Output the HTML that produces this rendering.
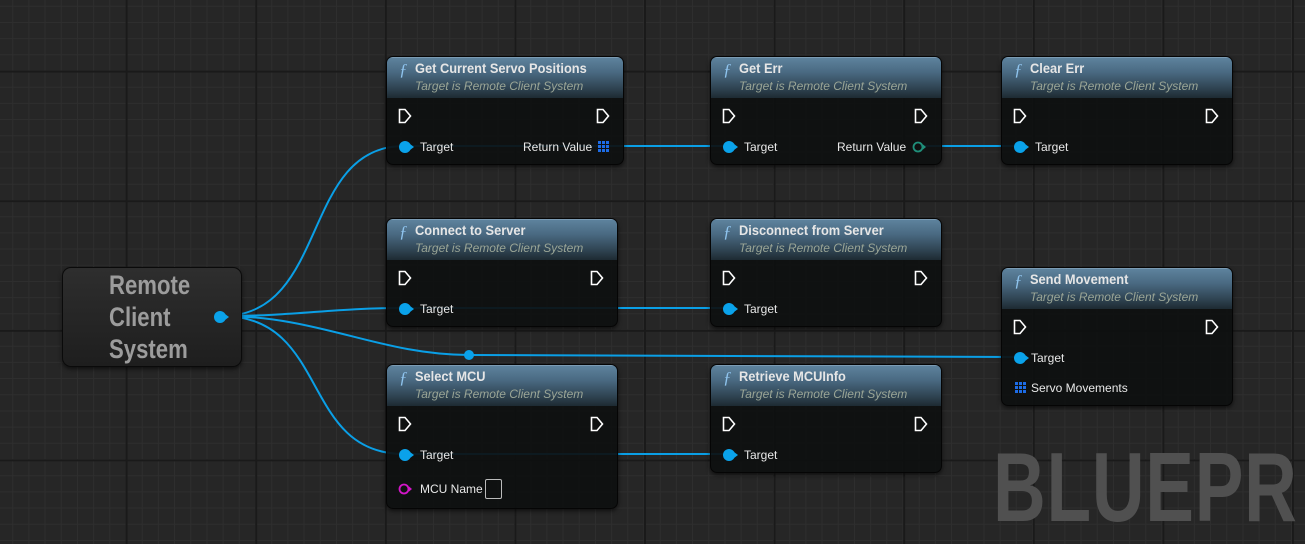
<!DOCTYPE html>
<html><head><meta charset="utf-8"><style>
html,body{margin:0;padding:0}
body{width:1305px;height:544px;overflow:hidden;position:relative;background-color:#262626;
background-image:
linear-gradient(to right,#1a1a1a 0,#1a1a1a 2px,transparent 2px),
linear-gradient(to bottom,#1a1a1a 0,#1a1a1a 2px,transparent 2px),
linear-gradient(to right,#2e2e2e 0,#2e2e2e 1px,transparent 1px),
linear-gradient(to bottom,#2e2e2e 0,#2e2e2e 1px,transparent 1px);
background-size:129.6px 129.6px,129.6px 129.6px,16.2px 16.2px,16.2px 16.2px;
background-position:-4px -59px,-4px -59px,-4px -59px,-4px -59px;
font-family:"Liberation Sans",sans-serif;}
.wm{position:absolute;left:993px;top:432px;font-weight:bold;font-size:98px;color:#505050;transform:scaleX(0.745);transform-origin:0 0;letter-spacing:1px;line-height:110px}
svg.w{position:absolute;left:0;top:0}
.node{position:absolute;border:1px solid #050505;border-radius:7px;background:rgba(14,16,16,0.93);box-shadow:0 2px 4px rgba(0,0,0,.6);overflow:hidden}
.hd{position:absolute;left:0;right:0;top:0;height:40px;background:linear-gradient(#5d829d 0,#4a6a82 35%,#2c3f4c 80%,#1d2a32 100%);border-top:1px solid #7b9bb3}
.f{position:absolute;left:12px;top:2px;color:#8fc4ee;font-family:"Liberation Serif",serif;font-style:italic;font-size:17px}
.t{position:absolute;left:28px;top:3px;color:#e6e6e6;font-weight:bold;font-size:13.5px;white-space:nowrap;transform:scaleX(0.95);transform-origin:0 0}
.s{position:absolute;left:28px;top:21px;color:#9aa596;font-style:italic;font-size:12px;white-space:nowrap}
.ex{position:absolute;width:14px;height:16px}
.lbl{position:absolute;color:#e8e8e8;font-size:12px;white-space:nowrap}
.pin{position:absolute;width:12px;height:12px;border-radius:50%;background:#0aa2ea}
.pin:after{content:"";position:absolute;left:11px;top:3px;border-left:4px solid #0aa2ea;border-top:3px solid transparent;border-bottom:3px solid transparent}
.rc{position:absolute;left:62px;top:267px;width:178px;height:98px;border:1px solid #0a0a0a;border-radius:9px;background:linear-gradient(#2e2e2e,#1e1e1e);box-shadow:0 2px 4px rgba(0,0,0,.6)}
.rct{position:absolute;left:46px;top:1px;color:#9c9c9c;font-weight:bold;font-size:27px;line-height:32px;transform:scaleX(0.82);transform-origin:0 0}
.arr{position:absolute}
</style></head><body>
<div class="wm">BLUEPR</div>
<svg class="w" width="1305" height="544">
<g fill="none" stroke="#0a9fe6" stroke-width="2">
<path d="M222,316 C 330,316 300,146 404,146"/>
<path d="M222,316 C 300,316 330,308 404,308"/>
<path d="M222,316 C 330,316 300,454 404,454"/>
<path d="M222,316 C 320,316 380,355 469,355 L1019,357"/>
<path d="M404,146 L727,146"/>
<path d="M920,146 L1019,146"/>
<path d="M404,308 L727,308"/>
<path d="M404,454 L727,454"/>
</g>
<circle cx="469" cy="355" r="5" fill="#0aa2ea"/>
</svg>

<div class="rc"><div class="rct">Remote<br>Client<br>System</div>
<div class="pin" style="left:151px;top:43px;background:#0aa2ea"></div></div>

<div class="node" style="left:386px;top:56px;width:236px;height:107px">
<div class="hd"><span class="f">ƒ</span><span class="t">Get Current Servo Positions</span><span class="s">Target is Remote Client System</span></div>
<svg class="ex" style="left:11px;top:51px"><path d="M1.5,1.5H7L12.5,8L7,14.5H1.5Z" fill="none" stroke="#fff" stroke-width="1.6"/></svg>
<svg class="ex" style="left:209px;top:51px"><path d="M1.5,1.5H7L12.5,8L7,14.5H1.5Z" fill="none" stroke="#fff" stroke-width="1.6"/></svg>
<div class="pin" style="left:12px;top:84px"></div><div class="lbl" style="left:33px;top:83px">Target</div>
<div class="lbl" style="left:136px;top:83px">Return Value</div>
<svg class="arr" style="left:211px;top:84px" width="11" height="11" fill="#1d6ce6"><rect x="0" y="0" width="3" height="3"/><rect x="4" y="0" width="3" height="3"/><rect x="8" y="0" width="3" height="3"/><rect x="0" y="4" width="3" height="3"/><rect x="4" y="4" width="3" height="3"/><rect x="8" y="4" width="3" height="3"/><rect x="0" y="8" width="3" height="3"/><rect x="4" y="8" width="3" height="3"/><rect x="8" y="8" width="3" height="3"/></svg>
</div>

<div class="node" style="left:710px;top:56px;width:230px;height:107px">
<div class="hd"><span class="f">ƒ</span><span class="t">Get Err</span><span class="s">Target is Remote Client System</span></div>
<svg class="ex" style="left:11px;top:51px"><path d="M1.5,1.5H7L12.5,8L7,14.5H1.5Z" fill="none" stroke="#fff" stroke-width="1.6"/></svg>
<svg class="ex" style="left:203px;top:51px"><path d="M1.5,1.5H7L12.5,8L7,14.5H1.5Z" fill="none" stroke="#fff" stroke-width="1.6"/></svg>
<div class="pin" style="left:12px;top:84px"></div><div class="lbl" style="left:33px;top:83px">Target</div>
<div class="lbl" style="left:126px;top:83px">Return Value</div>
<svg style="position:absolute;left:201px;top:83px" width="16" height="14"><circle cx="6" cy="7" r="4.5" fill="none" stroke="#1f8f7a" stroke-width="1.8"/><path d="M11,4.5L14,7L11,9.5Z" fill="#1f8f7a"/></svg>
</div>

<div class="node" style="left:1001px;top:56px;width:230px;height:107px">
<div class="hd"><span class="f">ƒ</span><span class="t">Clear Err</span><span class="s">Target is Remote Client System</span></div>
<svg class="ex" style="left:11px;top:51px"><path d="M1.5,1.5H7L12.5,8L7,14.5H1.5Z" fill="none" stroke="#fff" stroke-width="1.6"/></svg>
<svg class="ex" style="left:203px;top:51px"><path d="M1.5,1.5H7L12.5,8L7,14.5H1.5Z" fill="none" stroke="#fff" stroke-width="1.6"/></svg>
<div class="pin" style="left:12px;top:84px"></div><div class="lbl" style="left:33px;top:83px">Target</div>
</div>

<div class="node" style="left:386px;top:218px;width:230px;height:107px">
<div class="hd"><span class="f">ƒ</span><span class="t">Connect to Server</span><span class="s">Target is Remote Client System</span></div>
<svg class="ex" style="left:11px;top:51px"><path d="M1.5,1.5H7L12.5,8L7,14.5H1.5Z" fill="none" stroke="#fff" stroke-width="1.6"/></svg>
<svg class="ex" style="left:203px;top:51px"><path d="M1.5,1.5H7L12.5,8L7,14.5H1.5Z" fill="none" stroke="#fff" stroke-width="1.6"/></svg>
<div class="pin" style="left:12px;top:84px"></div><div class="lbl" style="left:33px;top:83px">Target</div>
</div>

<div class="node" style="left:710px;top:218px;width:230px;height:107px">
<div class="hd"><span class="f">ƒ</span><span class="t">Disconnect from Server</span><span class="s">Target is Remote Client System</span></div>
<svg class="ex" style="left:11px;top:51px"><path d="M1.5,1.5H7L12.5,8L7,14.5H1.5Z" fill="none" stroke="#fff" stroke-width="1.6"/></svg>
<svg class="ex" style="left:203px;top:51px"><path d="M1.5,1.5H7L12.5,8L7,14.5H1.5Z" fill="none" stroke="#fff" stroke-width="1.6"/></svg>
<div class="pin" style="left:12px;top:84px"></div><div class="lbl" style="left:33px;top:83px">Target</div>
</div>

<div class="node" style="left:1001px;top:267px;width:230px;height:137px">
<div class="hd"><span class="f">ƒ</span><span class="t">Send Movement</span><span class="s">Target is Remote Client System</span></div>
<svg class="ex" style="left:11px;top:51px"><path d="M1.5,1.5H7L12.5,8L7,14.5H1.5Z" fill="none" stroke="#fff" stroke-width="1.6"/></svg>
<svg class="ex" style="left:203px;top:51px"><path d="M1.5,1.5H7L12.5,8L7,14.5H1.5Z" fill="none" stroke="#fff" stroke-width="1.6"/></svg>
<div class="pin" style="left:12px;top:84px"></div><div class="lbl" style="left:29px;top:83px">Target</div>
<svg class="arr" style="left:13px;top:114px" width="11" height="11" fill="#1d6ce6"><rect x="0" y="0" width="3" height="3"/><rect x="4" y="0" width="3" height="3"/><rect x="8" y="0" width="3" height="3"/><rect x="0" y="4" width="3" height="3"/><rect x="4" y="4" width="3" height="3"/><rect x="8" y="4" width="3" height="3"/><rect x="0" y="8" width="3" height="3"/><rect x="4" y="8" width="3" height="3"/><rect x="8" y="8" width="3" height="3"/></svg>
<div class="lbl" style="left:29px;top:113px">Servo Movements</div>
</div>

<div class="node" style="left:386px;top:364px;width:230px;height:143px">
<div class="hd"><span class="f">ƒ</span><span class="t">Select MCU</span><span class="s">Target is Remote Client System</span></div>
<svg class="ex" style="left:11px;top:51px"><path d="M1.5,1.5H7L12.5,8L7,14.5H1.5Z" fill="none" stroke="#fff" stroke-width="1.6"/></svg>
<svg class="ex" style="left:203px;top:51px"><path d="M1.5,1.5H7L12.5,8L7,14.5H1.5Z" fill="none" stroke="#fff" stroke-width="1.6"/></svg>
<div class="pin" style="left:12px;top:84px"></div><div class="lbl" style="left:33px;top:83px">Target</div>
<svg style="position:absolute;left:11px;top:117px" width="16" height="14"><circle cx="6" cy="7" r="4.5" fill="none" stroke="#d316c8" stroke-width="1.8"/><path d="M11,4.5L14,7L11,9.5Z" fill="#d316c8"/></svg>
<div class="lbl" style="left:33px;top:117px">MCU Name</div>
<div style="position:absolute;left:98px;top:114px;width:15px;height:18px;border:1px solid #bbb;border-radius:2px"></div>
</div>

<div class="node" style="left:710px;top:364px;width:230px;height:107px">
<div class="hd"><span class="f">ƒ</span><span class="t">Retrieve MCUInfo</span><span class="s">Target is Remote Client System</span></div>
<svg class="ex" style="left:11px;top:51px"><path d="M1.5,1.5H7L12.5,8L7,14.5H1.5Z" fill="none" stroke="#fff" stroke-width="1.6"/></svg>
<svg class="ex" style="left:203px;top:51px"><path d="M1.5,1.5H7L12.5,8L7,14.5H1.5Z" fill="none" stroke="#fff" stroke-width="1.6"/></svg>
<div class="pin" style="left:12px;top:84px"></div><div class="lbl" style="left:33px;top:83px">Target</div>
</div>
</body></html>
